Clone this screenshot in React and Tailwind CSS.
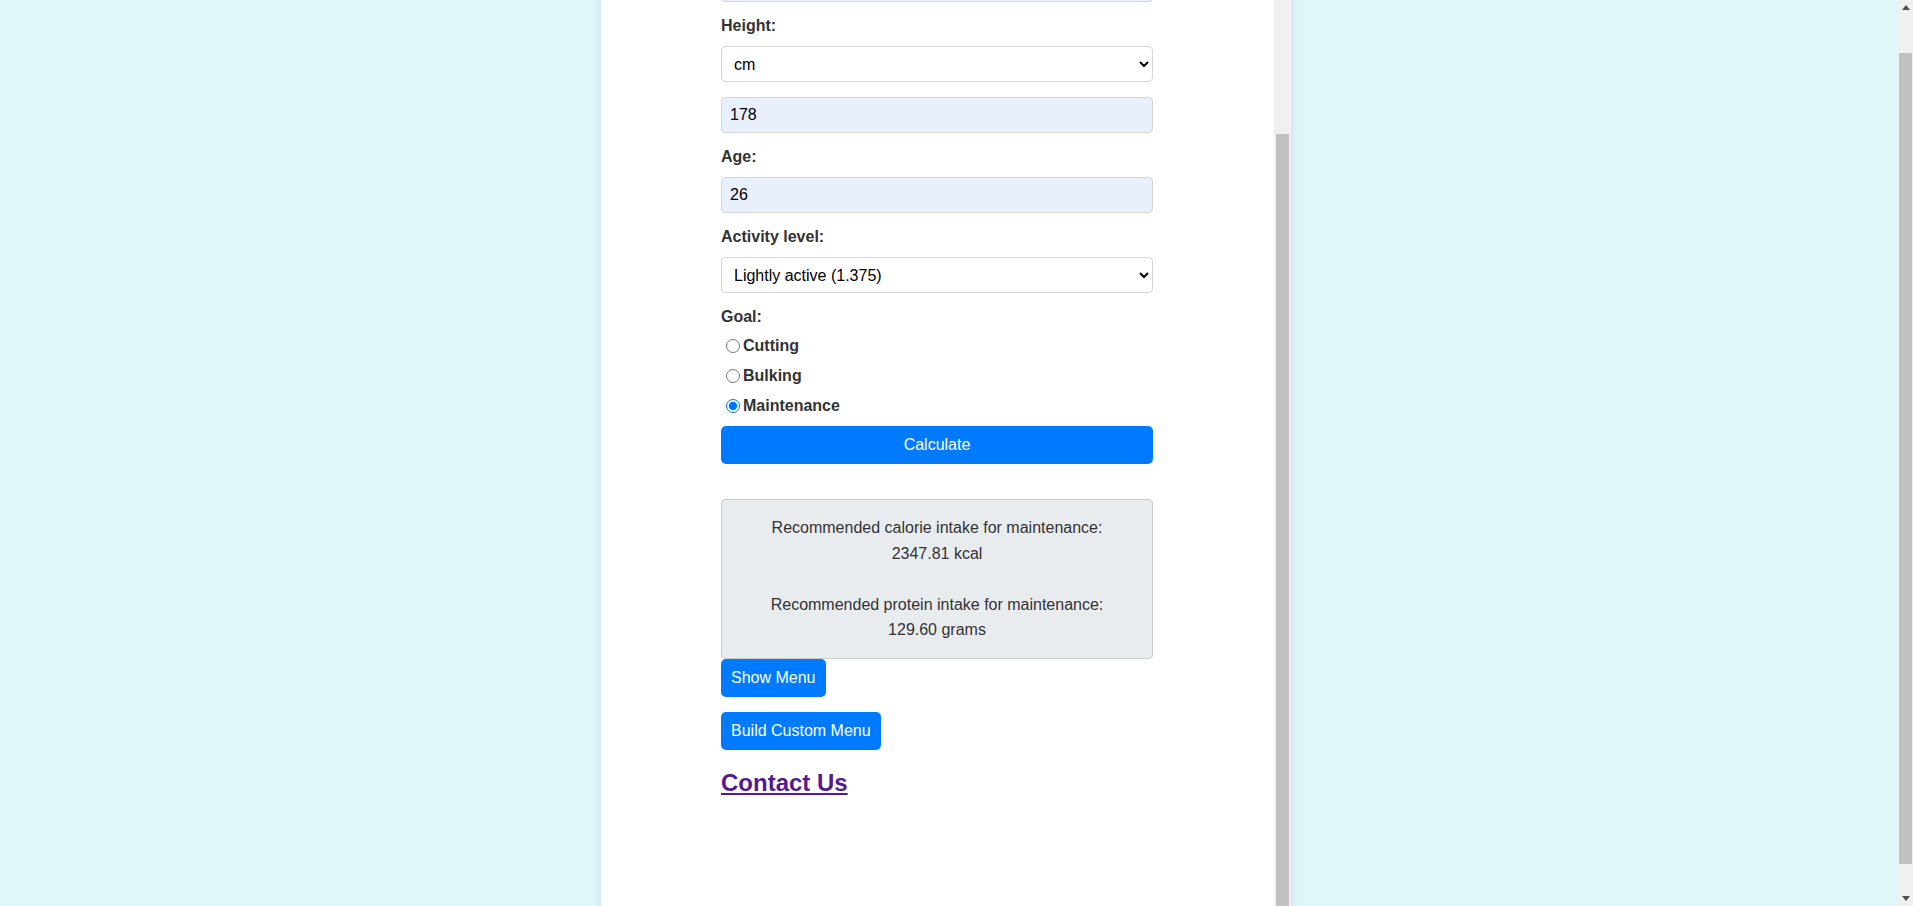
import React, { useEffect, useRef, useState } from 'react';

const labelCls = "block text-[16px] leading-[18px] font-bold text-[#333] mb-[11px]";
const selectCls = "block w-full h-9 px-2 mb-[15px] border border-[#d6d6d6] rounded-[4px] bg-white text-black text-[16px] outline-none";
const inputCls = "block w-full h-9 px-2 mb-[15px] border border-[#d6d6d6] rounded-[4px] bg-[#e8f0fe] text-black text-[16px] outline-none";
const btnCls = "bg-[#007bff] text-white text-[16px] leading-[18px] py-[10px] px-[10px] rounded-[5px]";

const Arrow = ({ down }) => (
    <div className="h-[15px] flex items-center justify-center">
        <svg width="8" height="5" viewBox="0 0 8 5">
            <path d={down ? "M0 0 L8 0 L4 5 Z" : "M0 5 L8 5 L4 0 Z"} fill="#505050" />
        </svg>
    </div>
);

const App = () => {
    const pageRef = useRef(null);
    const panelRef = useRef(null);
    const heightRef = useRef(null);
    const [goal, setGoal] = useState('maintenance');

    useEffect(() => {
        // restore the scrolled state seen in the screenshot
        if (panelRef.current && heightRef.current) {
            panelRef.current.scrollTop = heightRef.current.offsetTop - 49;
        }
        if (pageRef.current) pageRef.current.scrollTop = 42;
    }, []);

    return (
        <div className="h-screen flex bg-[#e0f7fa] font-['Liberation_Sans',Arial,sans-serif]">
            <div ref={pageRef} className="flex-1 h-full overflow-y-scroll">
                <div className="h-[978px] pt-[10px]">
                    <div className="flex ml-[601px] w-[690px] h-[958px] bg-white shadow-[0_0_8px_rgba(0,0,0,0.12)]">
                        <div ref={panelRef} className="relative w-[673px] h-full overflow-y-scroll">
                            <div className="pl-[120px] pt-[20px] pb-[130px]">
                                <form className="w-[432px]" onSubmit={(e) => e.preventDefault()}>
                                    <h1 className="text-[32px] leading-[40px] font-bold text-[#333] text-center mb-[40px]">Calorie Calculator</h1>

                                    <label className={labelCls}>Weight:</label>
                                    <select className={selectCls} defaultValue="kg">
                                        <option value="kg">kg</option>
                                        <option value="lbs">lbs</option>
                                    </select>
                                    <input type="number" className={inputCls} defaultValue="75" />

                                    <label ref={heightRef} className={labelCls}>Height:</label>
                                    <select className={selectCls} defaultValue="cm">
                                        <option value="cm">cm</option>
                                        <option value="ft">ft/in</option>
                                    </select>
                                    <input type="number" className={inputCls} defaultValue="178" />

                                    <label className={labelCls}>Age:</label>
                                    <input type="number" className={inputCls} defaultValue="26" />

                                    <label className={labelCls}>Activity level:</label>
                                    <select className={selectCls} defaultValue="1.375">
                                        <option value="1.2">Sedentary (1.2)</option>
                                        <option value="1.375">Lightly active (1.375)</option>
                                        <option value="1.55">Moderately active (1.55)</option>
                                        <option value="1.725">Very active (1.725)</option>
                                    </select>

                                    <label className="block text-[16px] leading-[18px] font-bold text-[#333] mb-[5px]">Goal:</label>
                                    {['cutting', 'bulking', 'maintenance'].map((g) => (
                                        <label key={g} className="flex items-center h-[30px] text-[16px] font-bold text-[#333]">
                                            <input
                                                type="radio"
                                                name="goal"
                                                value={g}
                                                checked={goal === g}
                                                onChange={() => setGoal(g)}
                                                className="ml-[5px] mr-[3px] w-[14px] h-[14px]"
                                            />
                                            {g.charAt(0).toUpperCase() + g.slice(1)}
                                        </label>
                                    ))}

                                    <button type="submit" className={`${btnCls} block w-full mt-[5px]`}>Calculate</button>

                                    <div className="mt-[35px] border border-[#ccc] rounded-[4px] bg-[#e9ecef] p-[15px] text-center text-[16px] leading-[25.6px] text-[#333]">
                                        Recommended calorie intake for maintenance:<br />
                                        2347.81 kcal<br />
                                        <br />
                                        Recommended protein intake for maintenance:<br />
                                        129.60 grams
                                    </div>

                                    <button type="button" className={`${btnCls} block`}>Show Menu</button>
                                    <button type="button" className={`${btnCls} block mt-[15px]`}>Build Custom Menu</button>

                                    <h2 className="mt-[15px] text-[24px] font-bold">
                                        <a href="#contact" className="text-[#551a8b] underline">Contact Us</a>
                                    </h2>
                                </form>
                            </div>
                        </div>
                        {/* panel scrollbar */}
                        <div className="w-[17px] h-full flex flex-col bg-[#f0f0f0]">
                            <div className="mt-[166px] mx-[2px] flex-1 bg-[#c1c1c1]" />
                        </div>
                    </div>
                </div>
            </div>
            {/* window scrollbar */}
            <div className="w-[15px] h-full flex flex-col bg-[#f0f0f0]">
                <Arrow />
                <div className="mt-[38px] mx-[1px] h-[811px] bg-[#c1c1c1]" />
                <div className="flex-1" />
                <Arrow down />
            </div>
        </div>
    );
};

export default App;
